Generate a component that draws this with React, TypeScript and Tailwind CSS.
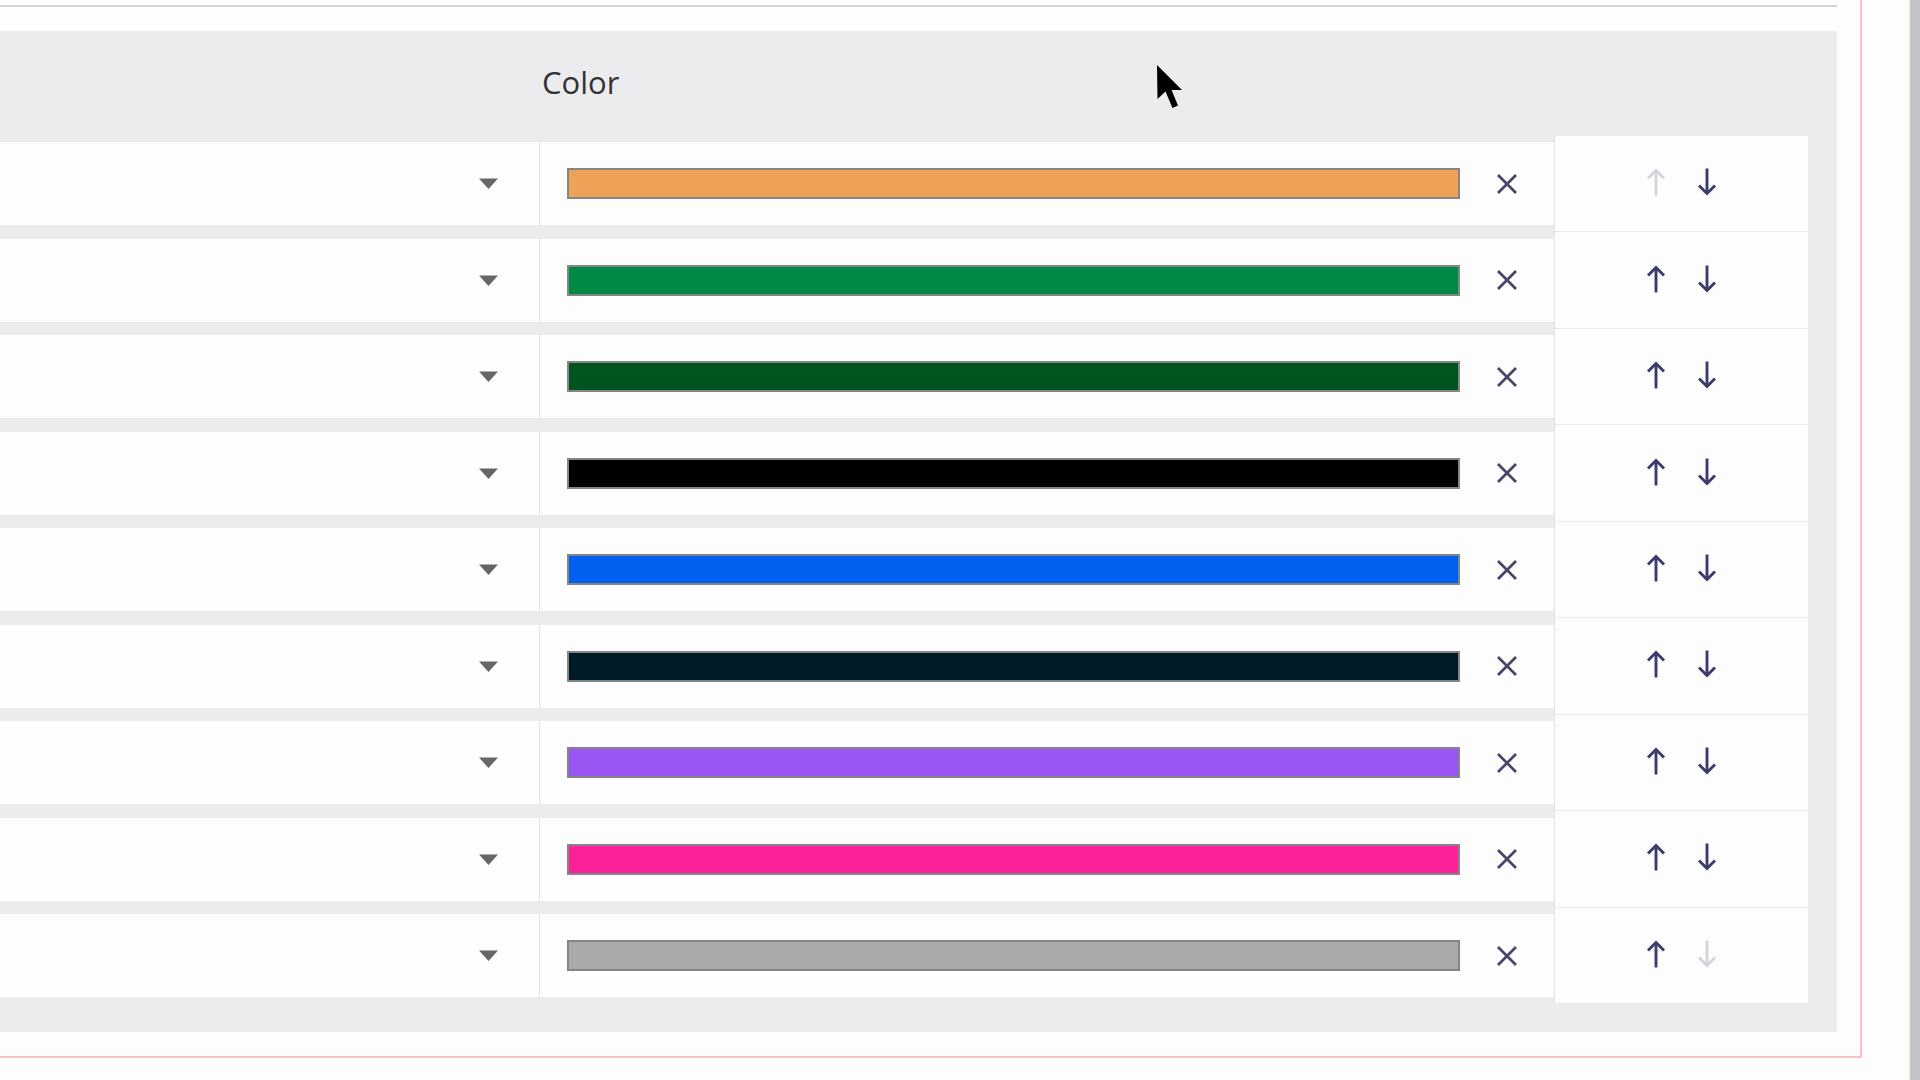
import React from 'react';

const swatches = [
  { color: '#eea257', up: false, down: true },
  { color: '#008a46', up: true, down: true },
  { color: '#00541f', up: true, down: true },
  { color: '#000000', up: true, down: true },
  { color: '#0060f0', up: true, down: true },
  { color: '#001b28', up: true, down: true },
  { color: '#9b55f2', up: true, down: true },
  { color: '#fd219a', up: true, down: true },
  { color: '#a9a9a9', up: true, down: false },
];

function Caret() {
  return (
    <svg width="21" height="13" viewBox="0 0 21 13">
      <path d="M1 1.5 L20 1.5 L10.5 12 Z" fill="#666666" />
    </svg>
  );
}

function Cross() {
  return (
    <svg width="22" height="22" viewBox="0 0 22 22">
      <path d="M2 2 L20 20 M20 2 L2 20" stroke="#45456a" strokeWidth="2.7" strokeLinecap="butt" />
    </svg>
  );
}

function Arrow({ dir, enabled }: { dir: 'up' | 'down'; enabled: boolean }) {
  const stroke = enabled ? '#3b3b6e' : '#d4d4dd';
  return (
    <svg width="20" height="28" viewBox="0 0 20 28" className={dir === 'down' ? 'rotate-180' : ''}>
      <path d="M10 2.5 L10 27.5" stroke={stroke} strokeWidth="2.9" />
      <path d="M2 10.5 L10 2.5 L18 10.5" stroke={stroke} strokeWidth="2.9" fill="none" />
    </svg>
  );
}

function Cursor() {
  return (
    <svg width="26" height="44" viewBox="0 0 26 44" className="absolute left-[1157px] top-[65px]">
      <path d="M0 0 L0.5 34 L8.5 26.5 L15.5 43 L21 40.5 L14.5 25 L25 25 Z" fill="#000000" />
    </svg>
  );
}

export default function App() {
  return (
    <div className="relative flex h-screen w-full overflow-hidden bg-[#fdfdfd]" style={{ fontFamily: '"Open Sans", "Liberation Sans", sans-serif' }}>
      <div className="w-[1908px] shrink-0">
        <div className="h-[1058px] w-[1862px] border-b-2 border-r-2 border-[#f5bfc3] pt-[5px]">
          <div className="h-[2px] w-[1837px] bg-[#d3d3dc]" />
          <div className="mt-[24px] flex h-[1001px] w-[1837px] bg-[#ececef] pr-[29px]">
            <div className="flex w-[1554px] flex-col">
              <div className="flex h-[111px] pt-[30px]">
                <div className="w-[542px]" />
                <div className="text-[31px] leading-[42px] text-[#333333]">Color</div>
              </div>
              <div className="flex flex-col gap-[13.5px]">
                {swatches.map((s, i) => (
                  <div key={i} className="flex h-[83px]">
                    <div className="flex w-[540px] items-center justify-end border-r border-[#e1e1e7] bg-[#fdfdfd] pr-[40px]">
                      <Caret />
                    </div>
                    <div className="flex flex-1 items-center bg-[#fdfdfd] pl-[27px]">
                      <div className="h-[31px] w-[893px] border-2 border-[#858585]" style={{ backgroundColor: s.color }} />
                      <div className="ml-[36px] flex">
                        <Cross />
                      </div>
                    </div>
                  </div>
                ))}
              </div>
            </div>
            <div className="mt-[105px] flex h-[867px] w-[254px] flex-col border-l border-[#e1e1e7] bg-[#fdfdfd]">
              {swatches.map((s, i) => (
                <div key={i} className={`flex flex-1 items-center justify-center gap-[31px] pb-[3px] ${i < swatches.length - 1 ? 'border-b border-[#e9e9ee]' : ''}`}>
                  <Arrow dir="up" enabled={s.up} />
                  <Arrow dir="down" enabled={s.down} />
                </div>
              ))}
            </div>
          </div>
        </div>
      </div>
      <div className="w-[12px] shrink-0 bg-[#f2f2f2] pl-[2px]">
        <div className="h-full w-[10px] bg-[#c3c3c8]" />
      </div>
      <Cursor />
    </div>
  );
}
